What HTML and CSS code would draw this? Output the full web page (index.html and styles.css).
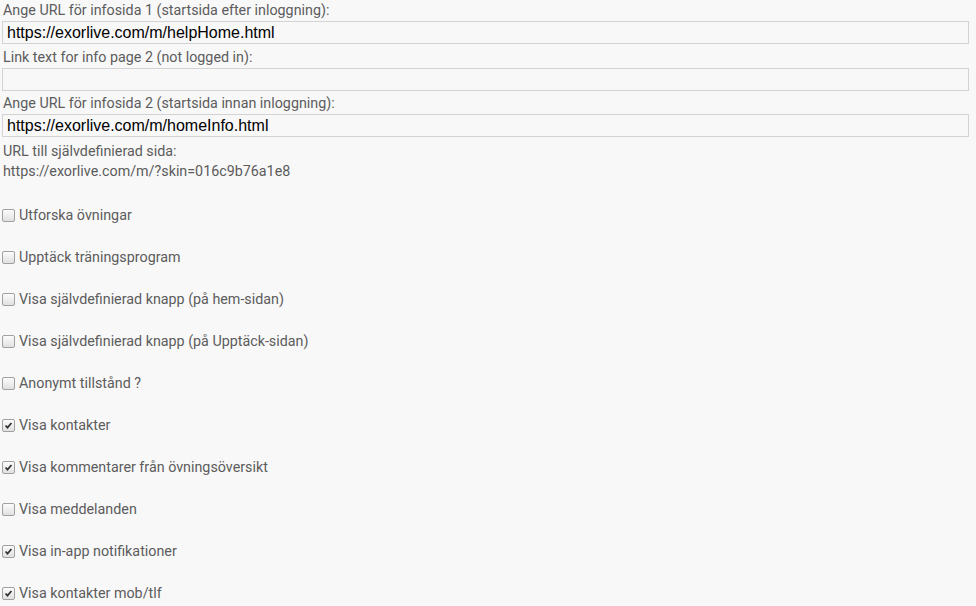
FILE: index.html
```html
<!DOCTYPE html>
<html lang="sv">
<head>
    <meta charset="UTF-8">
    <title>Inställningar</title>
    <link rel="stylesheet" href="styles.css">
</head>
<body>
<div class="settings">
    <div class="field">
        <label for="url1">Ange URL för infosida 1 (startsida efter inloggning):</label>
        <input type="text" id="url1" value="https://exorlive.com/m/helpHome.html">
    </div>
    <div class="field">
        <label for="link2">Link text for info page 2 (not logged in):</label>
        <input type="text" id="link2" value="">
    </div>
    <div class="field">
        <label for="url2">Ange URL för infosida 2 (startsida innan inloggning):</label>
        <input type="text" id="url2" value="https://exorlive.com/m/homeInfo.html">
    </div>
    <div class="custom-url">
        <div>URL till självdefinierad sida:</div>
        <div>https://exorlive.com/m/?skin=016c9b76a1e8</div>
    </div>

    <ul class="options">
        <li><label><span class="box"></span>Utforska övningar</label></li>
        <li><label><span class="box"></span>Upptäck träningsprogram</label></li>
        <li><label><span class="box"></span>Visa självdefinierad knapp (på hem-sidan)</label></li>
        <li><label><span class="box"></span>Visa självdefinierad knapp (på Upptäck-sidan)</label></li>
        <li><label><span class="box"></span>Anonymt tillstånd ?</label></li>
        <li><label><span class="box checked"><svg viewBox="0 0 13 13"><path d="M3 6.5 L5.3 9 L10 3.5" /></svg></span>Visa kontakter</label></li>
        <li><label><span class="box checked"><svg viewBox="0 0 13 13"><path d="M3 6.5 L5.3 9 L10 3.5" /></svg></span>Visa kommentarer från övningsöversikt</label></li>
        <li><label><span class="box"></span>Visa meddelanden</label></li>
        <li><label><span class="box checked"><svg viewBox="0 0 13 13"><path d="M3 6.5 L5.3 9 L10 3.5" /></svg></span>Visa in-app notifikationer</label></li>
        <li><label><span class="box checked"><svg viewBox="0 0 13 13"><path d="M3 6.5 L5.3 9 L10 3.5" /></svg></span>Visa kontakter mob/tlf</label></li>
    </ul>
</div>
</body>
</html>
```

FILE: styles.css
```css
body {
    margin: 0;
    background-color: #f8f8f8;
    font-family: Roboto, "Noto Sans", sans-serif;
    font-size: 14.3px;
    color: #5c5c5c;
}
.settings {
    padding: 0 7px 0 2px;
}
.field label {
    display: block;
    padding-left: 1px;
    line-height: 21px;
}
.field input {
    display: block;
    box-sizing: border-box;
    width: 100%;
    height: 23px;
    margin: 0 0 2.5px;
    padding: 0 4px;
    border: 1px solid #d3d3d3;
    background-color: #f8f8f8;
    font-family: "Liberation Sans", Arial, sans-serif;
    font-size: 16px;
    color: #000;
}
.custom-url {
    padding-left: 1px;
    line-height: 20px;
    margin-top: 4px;
}
.options {
    list-style: none;
    margin: 25px 0 0;
    padding: 0;
}
.options li {
    height: 42px;
}
.options label {
    display: flex;
    align-items: center;
    line-height: 18px;
}
.box {
    box-sizing: border-box;
    width: 13px;
    height: 13px;
    margin-right: 4px;
    border: 1px solid #a0a0a0;
    border-radius: 2px;
    background: linear-gradient(#fcfcfc, #e0e0e0);
}
.box svg {
    display: block;
    width: 11px;
    height: 11px;
}
.box path {
    fill: none;
    stroke: #333;
    stroke-width: 2;
}
```
